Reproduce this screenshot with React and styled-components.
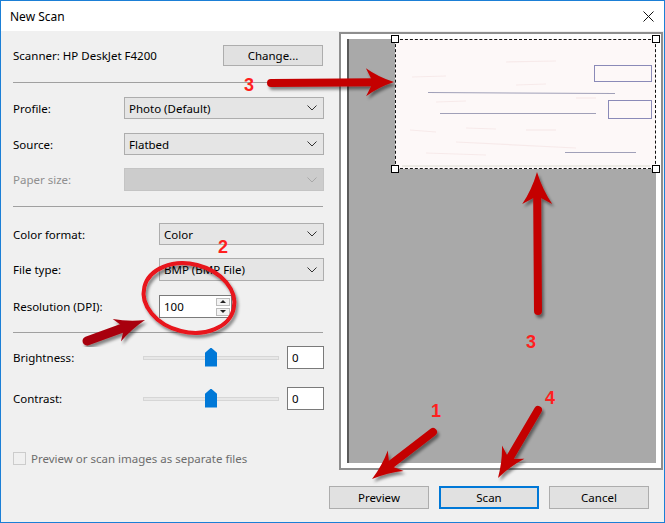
import styled, { createGlobalStyle } from "styled-components";

const GlobalStyle = createGlobalStyle`
  html, body {
    margin: 0;
    padding: 0;
    background: #ffffff;
  }
  body {
    font-family: "Noto Sans", "Liberation Sans", sans-serif;
    font-size: 11.5px;
    color: #000;
  }
`;

const Window = styled.div`
  position: relative;
  width: 665px;
  height: 523px;
  box-sizing: border-box;
  border: 1px solid #1b7fd6;
  background: #f0f0f0;
  display: flex;
  flex-direction: column;
  overflow: hidden;
`;

const TitleBar = styled.div`
  height: 30px;
  background: #fff;
  display: flex;
  align-items: center;
  justify-content: space-between;
  padding: 0 10px 0 9px;
`;

const Title = styled.span`
  font-size: 12px;
`;

const Content = styled.div`
  display: flex;
  height: 439px;
`;

const Form = styled.div`
  width: 311px;
  margin-left: 12px;
  padding-top: 14px;
  display: flex;
  flex-direction: column;
`;

const Row = styled.div`
  display: flex;
  align-items: center;
  justify-content: space-between;
  height: ${(props) => props.$h || 22}px;
  margin-top: ${(props) => props.$top || 0}px;
`;

const Label = styled.span`
  color: ${(props) => (props.$disabled ? "#8f8f8f" : "#000")};
  width: ${(props) => (props.$w ? props.$w + "px" : "auto")};
  flex-shrink: 0;
`;

const Separator = styled.div`
  height: 1px;
  background: #a0a0a0;
  margin-top: ${(props) => props.$top}px;
  margin-right: 1px;
`;

const Button = styled.div`
  box-sizing: border-box;
  width: 100px;
  height: ${(props) => props.$h || 23}px;
  background: #e1e1e1;
  border: ${(props) => (props.$default ? "2px solid #0078d7" : "1px solid #adadad")};
  display: flex;
  align-items: center;
  justify-content: center;
  margin-right: ${(props) => props.$mr || 0}px;
`;

const Select = styled.div`
  box-sizing: border-box;
  width: ${(props) => props.$w}px;
  height: 100%;
  background: ${(props) => (props.$disabled ? "#cccccc" : "#e5e5e5")};
  border: 1px solid ${(props) => (props.$disabled ? "#c4c4c4" : "#adadad")};
  display: flex;
  align-items: center;
  justify-content: space-between;
  padding: 0 6px 0 4px;
`;

const Chevron = ({ disabled }) => (
  <svg width="10" height="6" viewBox="0 0 10 6">
    <path
      d="M0.5 0.5 L5 5 L9.5 0.5"
      fill="none"
      stroke={disabled ? "#a8a8a8" : "#333"}
      strokeWidth="1"
    />
  </svg>
);

const NumberBox = styled.div`
  box-sizing: border-box;
  width: ${(props) => props.$w}px;
  height: 23px;
  background: #fff;
  border: 1px solid #7a7a7a;
  display: flex;
  align-items: center;
  justify-content: space-between;
  padding: 0 1px 0 4px;
`;

const Spinner = styled.div`
  display: flex;
  flex-direction: column;
  gap: 2px;
`;

const SpinButton = styled.div`
  box-sizing: border-box;
  width: 14px;
  height: 8px;
  border: 1px solid #bcbcbc;
  background: #f3f3f3;
  display: flex;
  align-items: center;
  justify-content: center;
  &::after {
    content: "";
    border-left: 3px solid transparent;
    border-right: 3px solid transparent;
    ${(props) =>
      props.$down ? "border-top: 3px solid #222;" : "border-bottom: 3px solid #222;"}
  }
`;

const Track = styled.div`
  position: relative;
  box-sizing: border-box;
  width: 136px;
  height: 4px;
  background: #e7e7e7;
  border: 1px solid #d6d6d6;
`;

const Thumb = styled.div`
  position: absolute;
  left: 61px;
  top: -9px;
  width: 12px;
  height: 19px;
  background: #0078d7;
  clip-path: polygon(50% 0, 100% 28%, 100% 100%, 0 100%, 0 28%);
`;

const SliderGroup = styled.div`
  display: flex;
  align-items: center;
  gap: 8px;
`;

const CheckRow = styled.div`
  display: flex;
  align-items: center;
  gap: 5px;
  margin-top: 41px;
  color: #6d6d6d;
`;

const CheckBox = styled.div`
  box-sizing: border-box;
  width: 13px;
  height: 13px;
  border: 1px solid #cccccc;
  background: #f0f0f0;
`;

const PreviewFrame = styled.div`
  box-sizing: border-box;
  width: 324px;
  height: 438px;
  margin-left: 15px;
  margin-top: 1px;
  border: 2px solid #8e8e8e;
  background: #fff;
  padding: 5px 5px 5px 6px;
`;

const Bed = styled.div`
  box-sizing: border-box;
  height: 100%;
  background: #a9a9a9;
  border-left: 2px solid #5a5a5a;
  display: flex;
  justify-content: flex-end;
  align-items: flex-start;
`;

const Document = styled.div`
  position: relative;
  box-sizing: border-box;
  width: 261px;
  height: 130px;
  background: #fdf8f8;
  border: 1px dashed #111;
`;

const Handle = styled.div`
  position: absolute;
  width: 6px;
  height: 6px;
  background: #fff;
  border: 1px solid #000;
  ${(props) => (props.$y === "top" ? "top: -5px;" : "bottom: -5px;")}
  ${(props) => (props.$x === "left" ? "left: -5px;" : "right: -5px;")}
`;

const Footer = styled.div`
  display: flex;
  justify-content: flex-end;
  gap: 10px;
  margin-top: 16px;
  padding-right: 15px;
`;

const Overlay = styled.svg`
  position: absolute;
  top: -1px;
  left: -1px;
  pointer-events: none;
`;

const Num = styled.text`
  font-family: "Liberation Sans", Arial, sans-serif;
  font-weight: bold;
  font-size: 18px;
  fill: #ff1f1f;
`;

function arrowPath(x1, y1, x2, y2, hl = 28, hw = 14, sweep = 7) {
  const L = Math.hypot(x2 - x1, y2 - y1);
  const ux = (x2 - x1) / L;
  const uy = (y2 - y1) / L;
  const nx = -uy;
  const ny = ux;
  const p = (a, b) => `${(x1 + ux * a + nx * b).toFixed(1)} ${(y1 + uy * a + ny * b).toFixed(1)}`;
  return {
    head: `M${p(L, 0)} Q${p(L - hl * 0.55, hw * 0.35)} ${p(L - hl, hw)} L${p(L - hl + sweep, 0)} L${p(L - hl, -hw)} Q${p(L - hl * 0.55, -hw * 0.35)} ${p(L, 0)} Z`,
    shaft: { x1, y1, x2: x1 + ux * (L - hl + sweep + 2), y2: y1 + uy * (L - hl + sweep + 2) },
  };
}

const Arrow = ({ from, to, color = "#c40000", width = 8, hl, hw, sweep }) => {
  const a = arrowPath(from[0], from[1], to[0], to[1], hl, hw, sweep);
  return (
    <g filter="url(#shadow)">
      <line {...a.shaft} stroke={color} strokeWidth={width} strokeLinecap="round" />
      <path d={a.head} fill={color} />
    </g>
  );
};

const Annotations = () => (
  <Overlay width="665" height="523" viewBox="0 0 665 523">
    <defs>
      <filter id="shadow" x="-20%" y="-20%" width="140%" height="140%">
        <feDropShadow dx="2" dy="3" stdDeviation="1.8" floodColor="#000" floodOpacity="0.45" />
      </filter>
    </defs>
    <Arrow from={[271, 83]} to={[394, 82]} />
    <Arrow from={[538, 311]} to={[537, 172]} width={8} hl={32} hw={15} sweep={8} />
    <Arrow from={[433, 432]} to={[372, 479]} width={8} hl={30} hw={13} sweep={8} />
    <Arrow from={[538, 410]} to={[498, 478]} width={8} hl={30} hw={13} sweep={8} />
    <Arrow from={[87, 341]} to={[145, 320]} color="#a8000c" width={9} hl={30} hw={12} sweep={8} />
    <g filter="url(#shadow)">
      <ellipse
        cx="189"
        cy="298"
        rx="46"
        ry="34"
        transform="rotate(14 189 298)"
        fill="none"
        stroke="#e8121a"
        strokeWidth="4"
      />
    </g>
    <Num x="244" y="91">3</Num>
    <Num x="218" y="253">2</Num>
    <Num x="526" y="348">3</Num>
    <Num x="431" y="417">1</Num>
    <Num x="545" y="404">4</Num>
  </Overlay>
);

const ScanImage = () => (
  <svg width="259" height="128" viewBox="0 0 259 128">
    <g stroke="#f7eaea" strokeWidth="1.2" fill="none">
      <path d="M16 37 L50 36" />
      <path d="M40 62 L70 61" />
      <path d="M120 45 L150 44" />
      <path d="M180 58 L200 58" />
      <path d="M14 90 L40 92" />
      <path d="M70 88 L100 89" />
      <path d="M130 90 L160 90" />
      <path d="M60 102 L180 108" />
      <path d="M30 113 L90 115" />
      <path d="M110 22 L160 21" />
    </g>
    <g stroke="#8a8ab8" strokeWidth="1" fill="none">
      <rect x="198.5" y="25.5" width="57" height="16" />
      <rect x="212.5" y="60.5" width="43" height="18" />
    </g>
    <g stroke="#a0a0b8" strokeWidth="1.1">
      <line x1="32" y1="52.5" x2="219" y2="53.5" />
      <line x1="44" y1="73.5" x2="200" y2="73.5" />
      <line x1="169" y1="112.5" x2="240" y2="112.5" />
    </g>
    <line x1="6" y1="126" x2="254" y2="126" stroke="#dcdcd2" strokeWidth="1" />
  </svg>
);

const App = () => (
  <>
    <GlobalStyle />
    <Window>
      <TitleBar>
        <Title>New Scan</Title>
        <svg width="11" height="11" viewBox="0 0 11 11">
          <path d="M0.5 0.5 L10.5 10.5 M10.5 0.5 L0.5 10.5" stroke="#111" strokeWidth="1" />
        </svg>
      </TitleBar>
      <Content>
        <Form>
          <Row $h={21}>
            <Label>Scanner: HP DeskJet F4200</Label>
            <Button $h={21} $mr={1}>Change...</Button>
          </Row>
          <Separator $top={16} />
          <Row $top={14}>
            <Label>Profile:</Label>
            <Select $w={200}>
              Photo (Default)
              <Chevron />
            </Select>
          </Row>
          <Row $top={14}>
            <Label>Source:</Label>
            <Select $w={200}>
              Flatbed
              <Chevron />
            </Select>
          </Row>
          <Row $top={13} $h={23}>
            <Label $disabled>Paper size:</Label>
            <Select $w={200} $disabled>
              <span />
              <Chevron disabled />
            </Select>
          </Row>
          <Separator $top={15} />
          <Row $top={16}>
            <Label>Color format:</Label>
            <Select $w={165}>
              Color
              <Chevron />
            </Select>
          </Row>
          <Row $top={13} $h={23}>
            <Label>File type:</Label>
            <Select $w={165}>
              BMP (BMP File)
              <Chevron />
            </Select>
          </Row>
          <Row $top={14} $h={23}>
            <Label>Resolution (DPI):</Label>
            <NumberBox $w={73} style={{ marginRight: 92 }}>
              100
              <Spinner>
                <SpinButton />
                <SpinButton $down />
              </Spinner>
            </NumberBox>
          </Row>
          <Separator $top={14} />
          <Row $top={13} $h={23}>
            <Label $w={129}>Brightness:</Label>
            <SliderGroup>
              <Track>
                <Thumb />
              </Track>
              <NumberBox $w={37}>0</NumberBox>
            </SliderGroup>
          </Row>
          <Row $top={18} $h={23}>
            <Label $w={129}>Contrast:</Label>
            <SliderGroup>
              <Track>
                <Thumb />
              </Track>
              <NumberBox $w={37}>0</NumberBox>
            </SliderGroup>
          </Row>
          <CheckRow>
            <CheckBox />
            Preview or scan images as separate files
          </CheckRow>
        </Form>
        <PreviewFrame>
          <Bed>
            <Document>
              <ScanImage />
              <Handle $x="left" $y="top" />
              <Handle $x="right" $y="top" />
              <Handle $x="left" $y="bottom" />
              <Handle $x="right" $y="bottom" />
            </Document>
          </Bed>
        </PreviewFrame>
      </Content>
      <Footer>
        <Button>Preview</Button>
        <Button $default>Scan</Button>
        <Button>Cancel</Button>
      </Footer>
      <Annotations />
    </Window>
  </>
);

export default App;
